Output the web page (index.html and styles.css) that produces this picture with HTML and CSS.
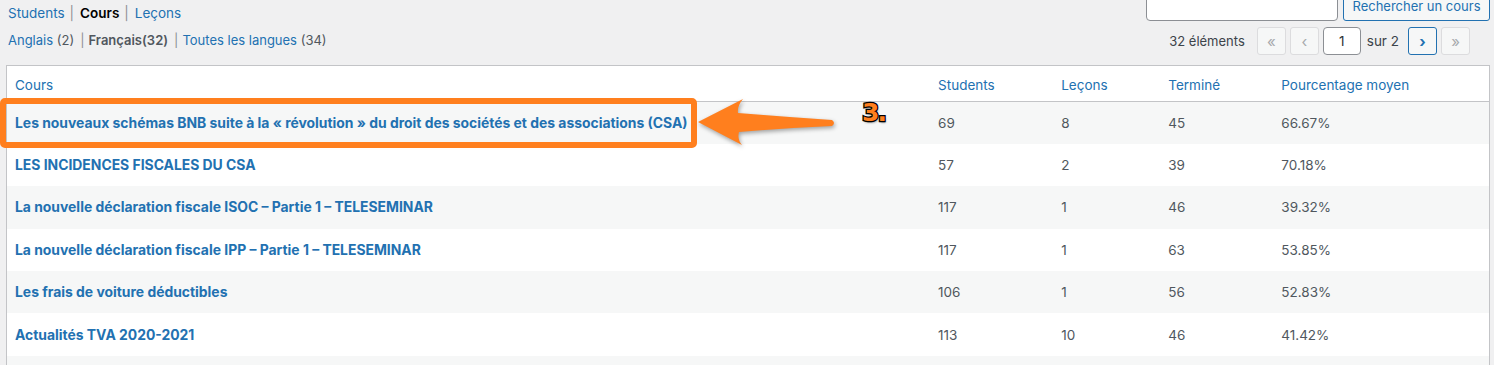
FILE: index.html
```html
<!DOCTYPE html>
<html lang="fr">
<head>
<meta charset="utf-8">
<title>Cours</title>
<link rel="stylesheet" href="styles.css">
</head>
<body>
<div class="wrap">
  <div class="top">
    <div class="filters">
      <ul class="subsubsub">
        <li><a href="#">Students</a><span class="sep">|</span></li>
        <li><a href="#" class="current">Cours</a><span class="sep">|</span></li>
        <li><a href="#">Leçons</a></li>
      </ul>
      <ul class="subsubsub langs">
        <li><a href="#">Anglais</a> <span class="count">(2)</span><span class="sep">|</span></li>
        <li><strong class="active">Français(32)</strong><span class="sep">|</span></li>
        <li><a href="#">Toutes les langues</a> <span class="count">(34)</span></li>
      </ul>
    </div>
    <div class="tools">
      <form class="search-box">
        <input type="search" class="search-input" aria-label="Rechercher">
        <button type="button" class="btn">Rechercher un cours</button>
      </form>
      <div class="pagination">
        <span class="num">32 éléments</span>
        <span class="pbtn disabled">«</span>
        <span class="pbtn disabled">‹</span>
        <input type="text" class="page-input" value="1" aria-label="Page">
        <span class="of">sur 2</span>
        <a href="#" class="pbtn active">›</a>
        <span class="pbtn disabled">»</span>
      </div>
    </div>
  </div>

  <table class="list">
    <colgroup>
      <col class="c-title"><col class="c-students"><col class="c-lessons"><col class="c-done"><col class="c-pct">
    </colgroup>
    <thead>
      <tr><th>Cours</th><th>Students</th><th>Leçons</th><th>Terminé</th><th>Pourcentage moyen</th></tr>
    </thead>
    <tbody>
      <tr><td><a href="#">Les nouveaux schémas BNB suite à la « révolution » du droit des sociétés et des associations (CSA)</a></td><td>69</td><td>8</td><td>45</td><td>66.67%</td></tr>
      <tr><td><a href="#">LES INCIDENCES FISCALES DU CSA</a></td><td>57</td><td>2</td><td>39</td><td>70.18%</td></tr>
      <tr><td><a href="#">La nouvelle déclaration fiscale ISOC – Partie 1 – TELESEMINAR</a></td><td>117</td><td>1</td><td>46</td><td>39.32%</td></tr>
      <tr><td><a href="#">La nouvelle déclaration fiscale IPP – Partie 1 – TELESEMINAR</a></td><td>117</td><td>1</td><td>63</td><td>53.85%</td></tr>
      <tr><td><a href="#">Les frais de voiture déductibles</a></td><td>106</td><td>1</td><td>56</td><td>52.83%</td></tr>
      <tr><td><a href="#">Actualités TVA 2020-2021</a></td><td>113</td><td>10</td><td>46</td><td>41.42%</td></tr>
      <tr><td><a href="#">&nbsp;</a></td><td></td><td></td><td></td><td></td></tr>
    </tbody>
  </table>

  <div class="highlight"></div>
  <svg class="arrow" width="150" height="60" viewBox="0 0 150 60" aria-hidden="true">
    <path d="M3,26 L48,3 Q42,10 43,17 Q90,21 137,24 Q141,27 137,30 Q90,32 44,36 Q42,43 47,49 Z" fill="#ff7f1e"/>
  </svg>
  <span class="step">3.</span>
</div>
</body>
</html>
```
FILE: styles.css
```css
html, body {
  margin: 0;
  padding: 0;
  overflow: hidden;
  background: #f0f0f1;
}
body {
  font-family: Inter, "Liberation Sans", sans-serif;
  font-size: 13.5px;
  color: #3c434a;
}
a {
  color: #2271b1;
  text-decoration: none;
}
.wrap {
  position: relative;
  padding: 0 4px 0 6px;
}
.top {
  display: flex;
  justify-content: space-between;
  align-items: flex-start;
  height: 65px;
}
.filters {
  padding-left: 2px;
}
.subsubsub {
  list-style: none;
  margin: 0;
  padding: 0;
  display: flex;
  height: 26px;
  line-height: 26px;
  color: #646970;
}
.subsubsub.langs {
  margin-top: 1px;
  font-size: 13px;
}
.subsubsub li {
  white-space: pre;
}
.sep {
  color: #8c8f94;
  margin: 0 6px 0 5px;
}
.langs .sep {
  margin: 0 4px 0 6px;
}
.current {
  color: #000;
  font-weight: 600;
}
.count {
  color: #50575e;
}
.active {
  color: #50575e;
  font-weight: 600;
}
.tools {
  display: flex;
  flex-direction: column;
  align-items: flex-end;
}
.search-box {
  display: flex;
  gap: 5px;
  margin: -9px 0 0 0;
}
.search-input {
  box-sizing: border-box;
  width: 192px;
  height: 30px;
  border: 1px solid #8c8f94;
  border-radius: 4px;
  background: #fff;
  margin: 0;
}
.btn {
  box-sizing: border-box;
  width: 147px;
  height: 30px;
  padding: 0;
  white-space: nowrap;
  border: 1px solid #2271b1;
  border-radius: 3px;
  background: #f6f7f7;
  color: #2271b1;
  font: inherit;
  font-size: 13px;
}
.pagination {
  display: flex;
  align-items: center;
  margin-top: 6px;
  margin-right: 20px;
  height: 28px;
  color: #3c434a;
}
.num {
  font-size: 13px;
  margin-right: 8px;
}
.pbtn {
  box-sizing: border-box;
  width: 29px;
  height: 28px;
  display: flex;
  align-items: center;
  justify-content: center;
  border: 1px solid #dcdcde;
  border-radius: 3px;
  background: #f6f7f7;
  color: #a7aaad;
  font-size: 15px;
  margin-left: 4px;
}
.pbtn.active {
  border-color: #2271b1;
  color: #2271b1;
  background: #f6f7f7;
  font-weight: 700;
}
.page-input {
  box-sizing: border-box;
  width: 38px;
  height: 28px;
  margin: 0 0 0 4px;
  border: 1px solid #8c8f94;
  border-radius: 4px;
  background: #fff;
  text-align: center;
  font: inherit;
  color: #2c3338;
  padding: 0;
}
.of {
  margin: 0 5px 0 6px;
}
.list {
  width: 1484px;
  border-collapse: collapse;
  table-layout: fixed;
  background: #fff;
  border: 1px solid #c3c4c7;
}
.c-title { width: 923px; }
.c-students { width: 123px; }
.c-lessons { width: 107px; }
.c-done { width: 113px; }
.c-pct { width: 216px; }
.list th {
  text-align: left;
  font-weight: 400;
  color: #2271b1;
  line-height: 18px;
  padding: 10px 8px 7px;
  border-bottom: 1px solid #c3c4c7;
}
.list td {
  box-sizing: border-box;
  height: 42.4px;
  padding: 0 8px;
  vertical-align: middle;
  color: #50575e;
  white-space: nowrap;
}
.list td a {
  font-weight: 700;
  font-size: 13.9px;
}
.list tbody tr:nth-child(odd) {
  background: #f6f7f7;
}
.highlight {
  position: absolute;
  left: 0;
  top: 98px;
  width: 697px;
  height: 50px;
  box-sizing: border-box;
  border: 6px solid #ff7f1e;
  border-radius: 5px;
}
.arrow {
  position: absolute;
  left: 695px;
  top: 96px;
  filter: drop-shadow(1px 2px 2px rgba(0, 0, 0, 0.35));
}
.step {
  position: absolute;
  left: 862px;
  top: 98px;
  font-family: "DejaVu Sans", sans-serif;
  font-weight: 700;
  font-size: 25px;
  line-height: 30px;
  color: #ff7f1e;
  -webkit-text-stroke: 2.5px #000;
  paint-order: stroke fill;
  text-shadow: 1px 2px 2px rgba(0, 0, 0, 0.35);
  letter-spacing: -2px;
}
```
